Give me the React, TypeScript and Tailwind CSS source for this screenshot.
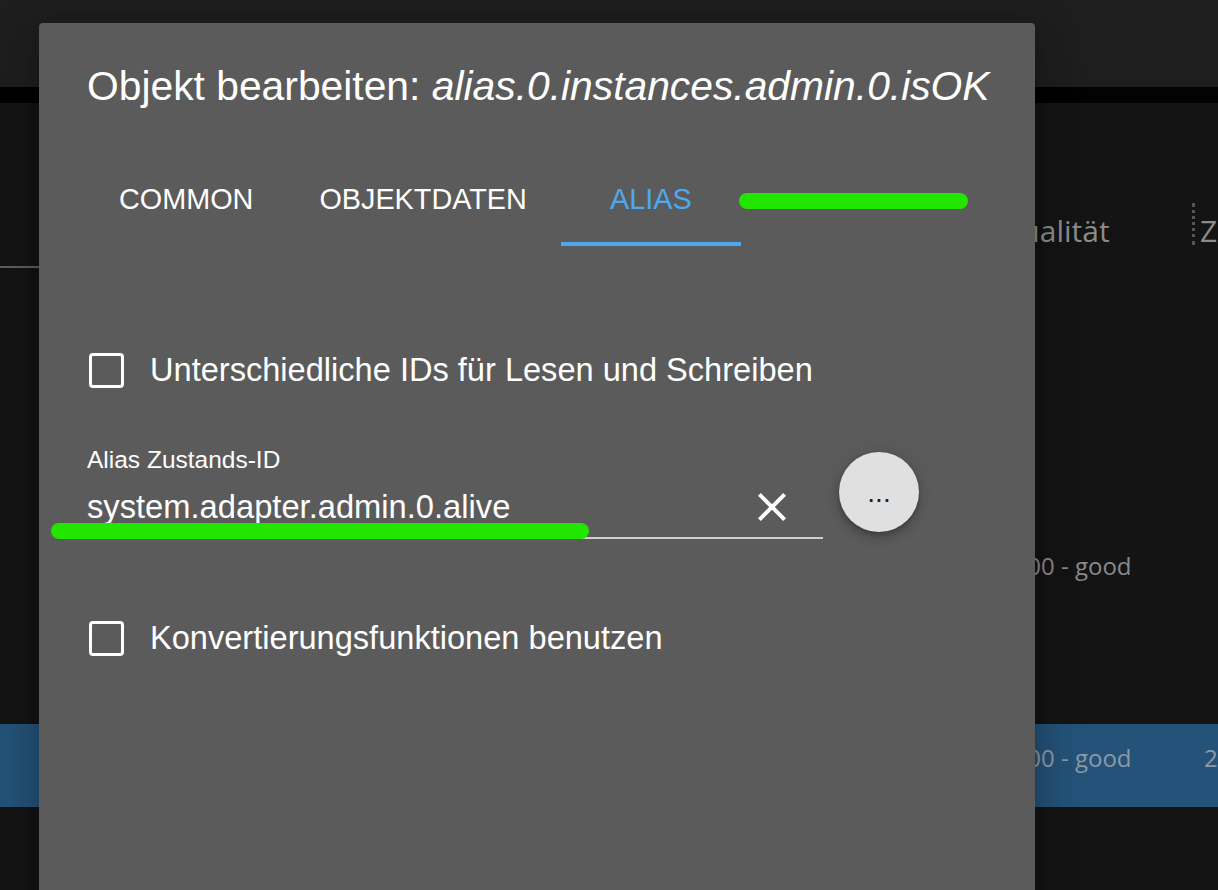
import React from "react";

const ClearIcon = () => (
  <svg viewBox="0 0 24 24" className="w-[48px] h-[48px]" fill="#ffffff">
    <path d="M19 6.41 17.59 5 12 10.59 6.41 5 5 6.41 10.59 12 5 17.59 6.41 19 12 13.41 17.59 19 19 17.59 13.41 12z" />
  </svg>
);

const CheckRow = ({ label, className }: { label: string; className: string }) => (
  <div className={`flex items-center h-[84px] ${className}`}>
    <div className="ml-[2px] w-[35px] h-[35px] rounded-[4px] border-[3.5px] border-white" />
    <span className="ml-[26px] text-[32.6px] leading-[40px] text-white">{label}</span>
  </div>
);

export default function App() {
  return (
    <div className="relative w-[1218px] h-[890px] overflow-hidden bg-[#141414] font-['Open_Sans',sans-serif]">
      {/* page behind the modal */}
      <div className="flex flex-col">
        <div className="h-[87px] bg-[#1e1e1e]" />
        <div className="h-[16px] bg-[#030303]" />
        <div className="h-[165px] grid grid-cols-[998px_200px_1fr]">
          <div className="flex items-end">
            <div className="w-[39px] h-[2px] bg-[#5f5f5f]" />
          </div>
          <div className="flex items-end justify-between pb-[17px]">
            <span className="text-[30px] leading-[40px] text-[#8c8c8c]">Qualität</span>
            <div className="mr-[3px] mb-[6px] h-[42px] border-l-[3px] border-dotted border-[#555555]" />
          </div>
          <div className="flex items-end pb-[17px] pl-[2px] overflow-hidden">
            <span className="text-[30px] leading-[40px] text-[#8c8c8c] whitespace-nowrap">Zeitstempel</span>
          </div>
        </div>
        <div className="h-[256px]" />
        <div className="h-[83px] grid grid-cols-[1001px_197px_1fr] items-center">
          <div />
          <span className="text-[24px] text-[#8a8a8a] whitespace-nowrap">0x00 - good</span>
          <div />
        </div>
        <div className="h-[117px]" />
        <div className="h-[83px] grid grid-cols-[1001px_197px_1fr] items-center pb-[16px] bg-[#245278]">
          <div />
          <span className="text-[24px] text-[#8d99a4] whitespace-nowrap">0x00 - good</span>
          <span className="pl-[6px] text-[24px] text-[#8d99a4] whitespace-nowrap overflow-hidden">2024-01-15 10:21:33</span>
        </div>
      </div>

      {/* modal dialog */}
      <div className="absolute left-[39px] top-[23px] w-[996px] h-[880px] rounded-[4px] bg-[#5b5b5b] shadow-[0_11px_15px_-7px_rgba(0,0,0,0.2),0_24px_38px_3px_rgba(0,0,0,0.14),0_9px_46px_8px_rgba(0,0,0,0.12)] font-['Liberation_Sans',Arial,sans-serif] text-white">
        <h2 className="pt-[31px] px-[48px] text-[40.8px] leading-[64px] font-normal whitespace-nowrap">
          Objekt bearbeiten: <i>alias.0.instances.admin.0.isOK</i>
        </h2>

        <div className="px-[48px]">
          <div className="mt-[32px] flex h-[96px]">
            <div className="pt-[4px] px-[32px] min-w-[180px] flex items-center justify-center text-[28.8px] uppercase">Common</div>
            <div className="pt-[4px] px-[34px] min-w-[180px] flex items-center justify-center text-[28.8px] uppercase">Objektdaten</div>
            <div className="relative pt-[4px] px-[32px] min-w-[180px] flex items-center justify-center text-[28.8px] uppercase text-[#4fa8ee]">
              Alias
              <div className="absolute left-0 right-0 bottom-0 h-[4px] bg-[#4fa8ee]" />
            </div>
            <div className="-ml-[2px] mt-[5px] self-center w-[229px] h-[16px] rounded-full bg-[#22e600]" />
          </div>

          <CheckRow label="Unterschiedliche IDs für Lesen und Schreiben" className="mt-[82px]" />

          <div className="mt-[32px] flex items-start">
            <div className="relative w-[736px]">
              <div className="text-[24.5px] leading-[32px]">Alias Zustands-ID</div>
              <div className="mt-[7px] h-[48px] flex items-center justify-between">
                <span className="text-[32.7px] leading-[40px]">system.adapter.admin.0.alive</span>
                <div className="mr-[27px]">
                  <ClearIcon />
                </div>
              </div>
              <div className="mt-[6px] h-[2px] bg-[#cfcfcf]" />
              <div className="absolute left-[-36px] top-[79px] w-[538px] h-[16px] rounded-full bg-[#22e600]" />
            </div>
            <button className="ml-[16px] mt-[8px] w-[80px] h-[80px] rounded-full bg-[#e0e0e0] text-[#222222] text-[28px] leading-none shadow-[0_3px_5px_-1px_rgba(0,0,0,0.2),0_6px_10px_0_rgba(0,0,0,0.14),0_1px_18px_0_rgba(0,0,0,0.12)] flex items-center justify-center">
              <span className="mt-[2px]">...</span>
            </button>
          </div>

          <CheckRow label="Konvertierungsfunktionen benutzen" className="mt-[57px]" />
        </div>
      </div>
    </div>
  );
}
